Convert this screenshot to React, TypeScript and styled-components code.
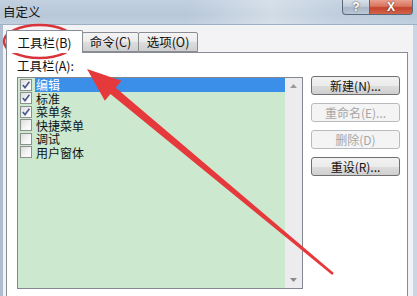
import React from 'react';
import styled, { createGlobalStyle } from 'styled-components';

const GlobalStyle = createGlobalStyle`
  html, body {
    margin: 0;
    padding: 0;
  }
  body {
    width: 417px;
    height: 296px;
    overflow: hidden;
    font-family: "Noto Sans CJK SC", "Liberation Sans", sans-serif;
    background: #f3f2f4;
  }
`;

const Window = styled.div`
  position: relative;
  width: 417px;
  height: 296px;
  display: flex;
  flex-direction: column;
  overflow: hidden;
`;

const TitleBar = styled.div`
  height: 24px;
  flex-shrink: 0;
  display: flex;
  align-items: flex-start;
  border-bottom: 1px solid #9eb0c4;
  background:
    linear-gradient(90deg, rgba(255, 255, 255, 0) 0%, rgba(255, 255, 255, 0) 45%, rgba(255, 255, 255, 0.35) 65%, rgba(255, 255, 255, 0.1) 80%, rgba(255, 255, 255, 0) 100%),
    linear-gradient(180deg, #c2d0df 0%, #b8c8d9 60%, #c1cfde 100%);
`;

const Title = styled.span`
  padding: 4px 0 0 3px;
  font-size: 12.5px;
  line-height: 16px;
  color: #111;
`;

const Controls = styled.div`
  margin-left: auto;
  margin-right: 4px;
  display: flex;
`;

const CaptionButton = styled.div<{ $close?: boolean }>`
  height: 15px;
  width: ${(p) => (p.$close ? '43px' : '28px')};
  box-sizing: border-box;
  display: flex;
  align-items: center;
  justify-content: center;
  border: 1px solid #5a6878;
  border-top: none;
  border-left: ${(p) => (p.$close ? 'none' : '1px solid #5a6878')};
  border-radius: ${(p) => (p.$close ? '0 0 4px 0' : '0 0 0 4px')};
  background: ${(p) =>
    p.$close
      ? 'linear-gradient(180deg, #e9a08f 0%, #d9735e 45%, #c5432c 55%, #d2654c 100%)'
      : 'linear-gradient(180deg, #d8e1ea 0%, #c0ccd9 45%, #a9b8c9 55%, #b9c7d6 100%)'};
  color: #fff;
  font-family: "Liberation Sans", sans-serif;
  font-weight: bold;
  font-size: 12px;
  line-height: 1;
  text-shadow: 0 0 2px #333;
`;

const Body = styled.div`
  flex: 1;
  display: flex;
  flex-direction: column;
  padding: 6px 5px 0 3px;
  border-left: 3px solid #aebdd0;
  border-right: 4px solid #c8d6e5;
  background: #f3f2f4;
  min-height: 0;
`;

const TabStrip = styled.div`
  display: flex;
  align-items: flex-end;
  height: 21px;
  flex-shrink: 0;
  position: relative;
  z-index: 1;
`;

const Tab = styled.div<{ $active?: boolean; $w: number }>`
  box-sizing: border-box;
  width: ${(p) => p.$w}px;
  height: ${(p) => (p.$active ? '23px' : '20px')};
  margin-bottom: ${(p) => (p.$active ? '-1px' : '0')};
  margin-left: ${(p) => (p.$active ? '0' : '-1px')};
  border: 1px solid #898c95;
  border-bottom: ${(p) => (p.$active ? 'none' : '1px solid #898c95')};
  border-radius: 2px 2px 0 0;
  background: ${(p) =>
    p.$active ? '#ffffff' : 'linear-gradient(180deg, #f4f4f4 0%, #ebebeb 50%, #dddddd 51%, #cfcfcf 100%)'};
  display: flex;
  align-items: center;
  justify-content: center;
  padding-top: ${(p) => (p.$active ? '1px' : '0')};
  font-size: 12.5px;
  line-height: 14px;
  color: #111;
  white-space: nowrap;
`;

const Panel = styled.div`
  flex: 1;
  background: #ffffff;
  border: 1px solid #898c95;
  border-bottom: none;
  padding: 0 0 0 10px;
  display: flex;
  flex-direction: column;
`;

const FieldLabel = styled.div`
  margin-top: 6px;
  height: 14px;
  font-size: 12.5px;
  line-height: 14px;
  color: #111;
`;

const ContentRow = styled.div`
  margin-top: 4px;
  display: flex;
  align-items: flex-start;
  gap: 8px;
`;

const ListBox = styled.div`
  width: 286px;
  height: 212px;
  box-sizing: border-box;
  border: 1px solid #828790;
  background: #cce8cf;
  display: flex;
`;

const Items = styled.div`
  flex: 1;
  display: flex;
  flex-direction: column;
  padding: 0 0 0 2px;
`;

const Item = styled.div`
  height: 13.5px;
  display: flex;
  align-items: center;
  gap: 3px;
`;

const Check = styled.div`
  width: 12px;
  height: 12px;
  box-sizing: border-box;
  border: 1px solid #8e8f8f;
  background: linear-gradient(135deg, #dcdcdc 0%, #f6f6f6 60%, #ffffff 100%);
  display: flex;
  align-items: center;
  justify-content: center;
  flex-shrink: 0;
`;

const ItemText = styled.span<{ $selected?: boolean }>`
  flex: 1;
  height: 100%;
  display: flex;
  align-items: center;
  padding-left: 1px;
  font-size: 12px;
  line-height: 13px;
  color: ${(p) => (p.$selected ? '#ffffff' : '#111')};
  background: ${(p) => (p.$selected ? '#3b8fe8' : 'transparent')};
`;

const ScrollBar = styled.div`
  width: 17px;
  background: #ecebee;
  display: flex;
  flex-direction: column;
  justify-content: space-between;
  align-items: center;
  padding: 6px 0 6px;
`;

const ButtonColumn = styled.div`
  margin-top: -1px;
  display: flex;
  flex-direction: column;
  gap: 8px;
`;

const DialogButton = styled.button`
  width: 89px;
  height: 19px;
  box-sizing: border-box;
  padding: 0;
  border: 1px solid #707070;
  border-radius: 3px;
  background: linear-gradient(180deg, #f2f2f2 0%, #ebebeb 50%, #dddddd 51%, #cfcfcf 100%);
  font-family: "Noto Sans CJK SC", "Liberation Sans", sans-serif;
  font-size: 12px;
  line-height: 17px;
  color: #111;

  &:disabled {
    border-color: #b7bbbf;
    background: #f4f4f4;
    color: #a6a6a6;
  }
`;

const Overlay = styled.svg`
  position: absolute;
  left: 0;
  top: 0;
  pointer-events: none;
`;

const CheckMark = () => (
  <svg width="10" height="10" viewBox="0 0 10 10">
    <path d="M1.8 5 L4 7.6 L8.4 1.8" fill="none" stroke="#4a5b8f" strokeWidth="1.6" />
  </svg>
);

const toolbars = [
  { name: '编辑', checked: true, selected: true },
  { name: '标准', checked: true },
  { name: '菜单条', checked: true },
  { name: '快捷菜单', checked: false },
  { name: '调试', checked: false },
  { name: '用户窗体', checked: false },
];

export default function App() {
  return (
    <Window>
      <GlobalStyle />
      <TitleBar>
        <Title>自定义</Title>
        <Controls>
          <CaptionButton>?</CaptionButton>
          <CaptionButton $close>X</CaptionButton>
        </Controls>
      </TitleBar>
      <Body>
        <TabStrip>
          <Tab $active $w={77}>工具栏(B)</Tab>
          <Tab $w={57}>命令(C)</Tab>
          <Tab $w={60}>选项(O)</Tab>
        </TabStrip>
        <Panel>
          <FieldLabel>工具栏(A):</FieldLabel>
          <ContentRow>
            <ListBox>
              <Items>
                {toolbars.map((t) => (
                  <Item key={t.name}>
                    <Check>{t.checked && <CheckMark />}</Check>
                    <ItemText $selected={t.selected}>{t.name}</ItemText>
                  </Item>
                ))}
              </Items>
              <ScrollBar>
                <svg width="7" height="4" viewBox="0 0 7 4">
                  <path d="M0 4 L3.5 0 L7 4 Z" fill="#9a9a9a" />
                </svg>
                <svg width="7" height="4" viewBox="0 0 7 4">
                  <path d="M0 0 L3.5 4 L7 0 Z" fill="#8a8a8a" />
                </svg>
              </ScrollBar>
            </ListBox>
            <ButtonColumn>
              <DialogButton>新建(N)...</DialogButton>
              <DialogButton disabled>重命名(E)...</DialogButton>
              <DialogButton disabled>删除(D)</DialogButton>
              <DialogButton>重设(R)...</DialogButton>
            </ButtonColumn>
          </ContentRow>
        </Panel>
      </Body>
      <Overlay width="417" height="296" viewBox="0 0 417 296">
        <ellipse cx="39.5" cy="41.5" rx="35.5" ry="16.5" fill="none" stroke="#d8343c" strokeWidth="2.5" />
        <polygon
          points="87,69 121.4,80.8 115.7,87.7 333.8,273.1 332.2,274.9 110.5,93.9 104.8,100.8"
          fill="#e5393b"
        />
      </Overlay>
    </Window>
  );
}
